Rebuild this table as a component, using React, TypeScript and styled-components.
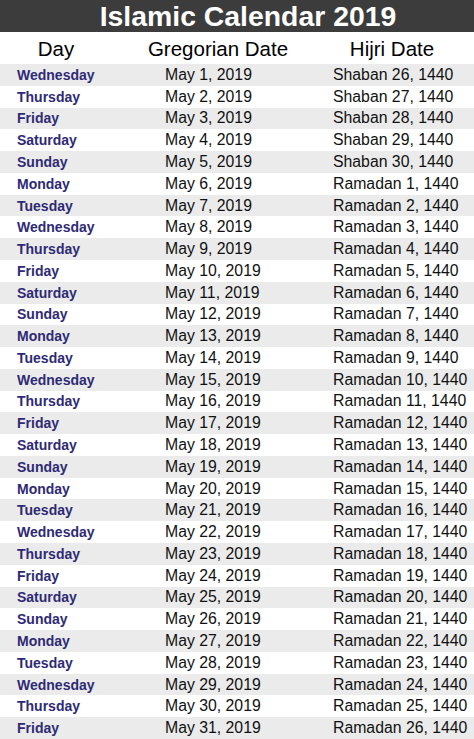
import React from "react";
import styled, { createGlobalStyle } from "styled-components";

const Global = createGlobalStyle`
  html, body { margin: 0; padding: 0; background: #fff; }
  body { font-family: "Liberation Sans", Arial, sans-serif; }
`;

const Page = styled.div`
  width: 474px;
  height: 739px;
  display: flex;
  flex-direction: column;
  overflow: hidden;
`;

const TitleBar = styled.div`
  height: 32px;
  flex: 0 0 32px;
  background: #3c3c3c;
  color: #fff;
  display: flex;
  align-items: center;
  justify-content: center;
  font-weight: bold;
  font-size: 28.4px;
  line-height: 1;
  padding: 1px 0 0 22px;
  box-sizing: border-box;
`;

const HeadRow = styled.div`
  height: 32px;
  flex: 0 0 32px;
  display: grid;
  grid-template-columns: 112px 212px 136px;
  align-items: center;
  font-size: 20.5px;
  color: #000;
  padding-top: 2px;
  box-sizing: border-box;
`;

const HeadCell = styled.div`
  text-align: center;
  white-space: nowrap;
`;

const Rows = styled.div`
  flex: 1;
  display: grid;
  grid-template-rows: repeat(31, 1fr);
`;

const Row = styled.div<{ $shade: boolean }>`
  display: grid;
  grid-template-columns: 165px 168px 1fr;
  align-items: center;
  background: ${(p) => (p.$shade ? "#ebebeb" : "#ffffff")};
`;

const DayCell = styled.div`
  padding-left: 17px;
  font-weight: bold;
  font-size: 14px;
  color: #2e2a75;
`;

const DateCell = styled.div`
  font-size: 15.8px;
  color: #111;
  white-space: nowrap;
`;

const days = [
  "Wednesday",
  "Thursday",
  "Friday",
  "Saturday",
  "Sunday",
  "Monday",
  "Tuesday",
];

const rows = Array.from({ length: 31 }, (_, i) => {
  const day = days[i % 7];
  const greg = `May ${i + 1}, 2019`;
  const hijri =
    i < 5 ? `Shaban ${26 + i}, 1440` : `Ramadan ${i - 4}, 1440`;
  return { day, greg, hijri };
});

export default function App() {
  return (
    <>
      <Global />
      <Page>
        <TitleBar>Islamic Calendar 2019</TitleBar>
        <HeadRow>
          <HeadCell>Day</HeadCell>
          <HeadCell>Gregorian Date</HeadCell>
          <HeadCell>Hijri Date</HeadCell>
        </HeadRow>
        <Rows>
          {rows.map((r, i) => (
            <Row key={i} $shade={i % 2 === 0}>
              <DayCell>{r.day}</DayCell>
              <DateCell>{r.greg}</DateCell>
              <DateCell>{r.hijri}</DateCell>
            </Row>
          ))}
        </Rows>
      </Page>
    </>
  );
}
